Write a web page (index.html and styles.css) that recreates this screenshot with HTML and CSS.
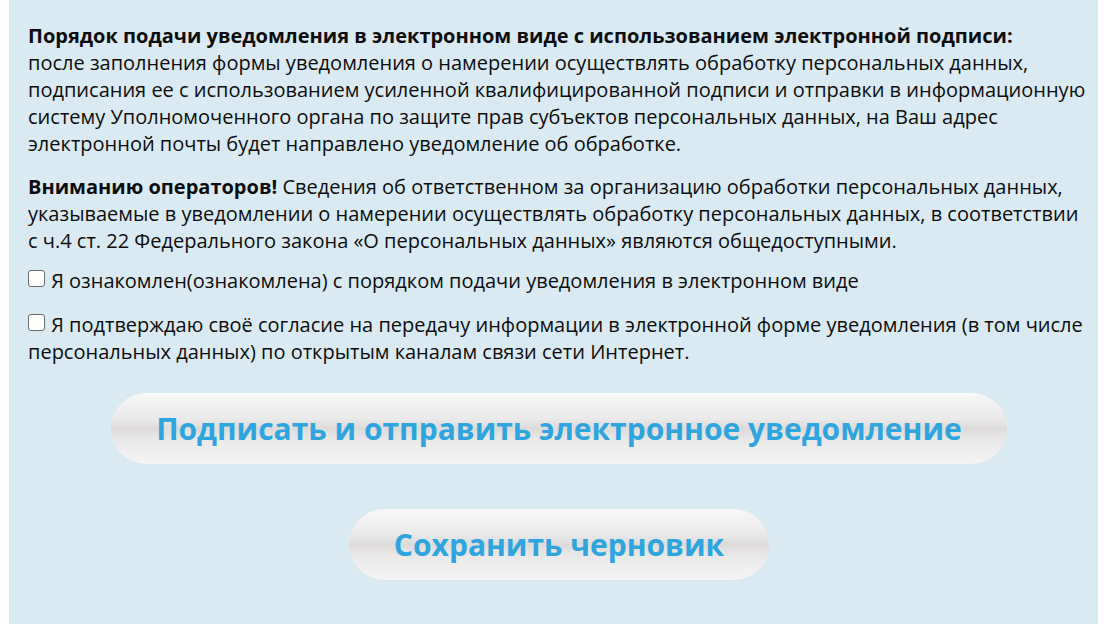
FILE: index.html
```html
<!DOCTYPE html>
<html lang="ru">
<head>
<meta charset="utf-8">
<title>Уведомление</title>
<link rel="stylesheet" href="styles.css">
</head>
<body>
<div class="panel">
  <p class="para"><b>Порядок подачи уведомления в электронном виде с использованием электронной подписи:</b><br>после заполнения формы уведомления о намерении осуществлять обработку персональных данных, подписания ее с использованием усиленной квалифицированной подписи и отправки в информационную систему Уполномоченного органа по защите прав субъектов персональных данных, на Ваш адрес электронной почты будет направлено уведомление об обработке.</p>
  <p class="para para-2"><b>Вниманию операторов!</b> Сведения об ответственном за организацию обработки персональных данных, указываемые в уведомлении о намерении осуществлять обработку персональных данных, в соответствии с ч.4 ст. 22 Федерального закона «О персональных данных» являются общедоступными.</p>
  <label class="check check-1"><input type="checkbox" class="box"> Я ознакомлен(ознакомлена) с порядком подачи уведомления в электронном виде</label>
  <label class="check check-2"><input type="checkbox" class="box"> Я подтверждаю своё согласие на передачу информации в электронной форме уведомления (в том числе персональных данных) по открытым каналам связи сети Интернет.</label>
  <div class="actions">
    <button class="btn btn-main" type="button">Подписать и отправить электронное уведомление</button>
    <button class="btn btn-draft" type="button">Сохранить черновик</button>
  </div>
</div>
</body>
</html>
```
FILE: styles.css
```css
html, body {
  margin: 0;
  padding: 0;
  background: #ffffff;
}
body {
  font-family: "Open Sans", "Noto Sans", sans-serif;
  color: #0d0d0d;
}
.panel {
  margin-left: 9px;
  width: 1089px;
  height: 624px;
  box-sizing: border-box;
  background: #daeaf2;
  padding: 22px 8px 0 19px;
  font-size: 20px;
  line-height: 27px;
}
.para {
  margin: 0;
}
.para b {
  font-weight: 700;
}
.para-2 {
  margin-top: 16px;
}
.check {
  display: block;
  margin-top: 13px;
}
.check-2 {
  margin-top: 17px;
}
.box {
  -webkit-appearance: none;
  appearance: none;
  box-sizing: border-box;
  width: 17px;
  height: 17px;
  margin: 0 1px 0 0;
  border: 1.5px solid #6a6a6a;
  border-radius: 3px;
  background: #ffffff;
  vertical-align: 1px;
}
.actions {
  display: flex;
  flex-direction: column;
  align-items: center;
  gap: 45px;
  margin-top: 28px;
}
.btn {
  border: none;
  border-radius: 36px;
  height: 71px;
  padding: 0 45px;
  font-family: "Open Sans", "Noto Sans", sans-serif;
  font-weight: 700;
  font-size: 30px;
  color: #2ea5de;
  background: linear-gradient(to bottom, #f8f8f8 0%, #ebeaea 35%, #dddbda 50%, #ebeaea 68%, #f5f5f5 100%);
  cursor: pointer;
}
```
